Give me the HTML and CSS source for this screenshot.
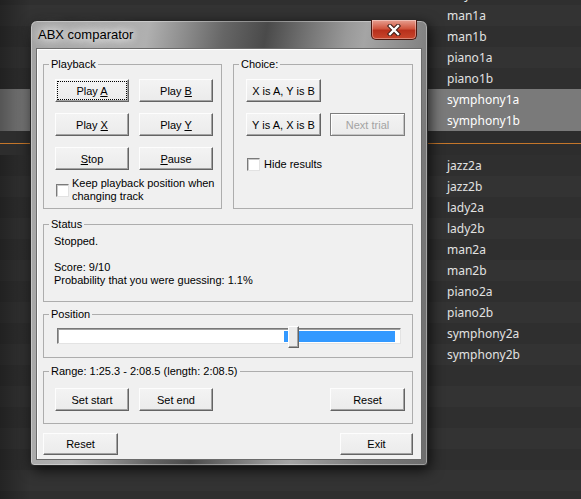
FILE: index.html
```html
<!DOCTYPE html>
<html lang="en">
<head>
    <meta charset="UTF-8">
    <meta name="viewport" content="width=device-width, initial-scale=1.0">
    <title>ABX comparator</title>
    <link rel="stylesheet" href="styles.css">
</head>
<body>
    <!-- playlist behind the dialog -->
    <ul class="tracks">
        <li>lady1b</li>
        <li>man1a</li>
        <li>man1b</li>
        <li>piano1a</li>
        <li>piano1b</li>
        <li class="selected">symphony1a</li>
        <li class="selected">symphony1b</li>
        <li class="separator"></li>
        <li>jazz2a</li>
        <li>jazz2b</li>
        <li>lady2a</li>
        <li>lady2b</li>
        <li>man2a</li>
        <li>man2b</li>
        <li>piano2a</li>
        <li>piano2b</li>
        <li>symphony2a</li>
        <li>symphony2b</li>
        <li></li>
        <li></li>
        <li></li>
        <li></li>
        <li></li>
        <li></li>
        <li></li>
    </ul>

    <div class="window">
        <div class="titlebar">
            <span class="title">ABX comparator</span>
            <button class="close" aria-label="Close">
                <svg width="14" height="12" viewBox="0 0 14 12">
                    <path d="M3 2 L11 10 M11 2 L3 10" stroke="#3a1a14" stroke-width="4.4" stroke-linecap="square"/>
                    <path d="M3 2 L11 10 M11 2 L3 10" stroke="#fff" stroke-width="2.4" stroke-linecap="square"/>
                </svg>
            </button>
        </div>

        <div class="client">
            <div class="top-row">
                <div class="group playback">
                    <span class="caption">Playback</span>
                    <div class="btn-grid">
                        <button class="btn focus">Play <u>A</u></button>
                        <button class="btn">Play <u>B</u></button>
                        <button class="btn">Play <u>X</u></button>
                        <button class="btn">Play <u>Y</u></button>
                        <button class="btn"><u>S</u>top</button>
                        <button class="btn"><u>P</u>ause</button>
                    </div>
                    <label class="check keep">
                        <span class="box"></span>
                        <span>Keep playback position when<br>changing track</span>
                    </label>
                </div>

                <div class="group choice">
                    <span class="caption">Choice:</span>
                    <div class="btn-grid wide">
                        <button class="btn">X is A, Y is B</button>
                        <span></span>
                        <button class="btn">Y is A, X is B</button>
                        <button class="btn" disabled>Next trial</button>
                    </div>
                    <label class="check hide">
                        <span class="box"></span>
                        <span>Hide results</span>
                    </label>
                </div>
            </div>

            <div class="group status">
                <span class="caption">Status</span>
                <p>Stopped.</p>
                <p>&nbsp;</p>
                <p>Score: 9/10</p>
                <p>Probability that you were guessing: 1.1%</p>
            </div>

            <div class="group position">
                <span class="caption">Position</span>
                <div class="track">
                    <div class="range-fill" style="left: 226px; width: 111px;"></div>
                    <div class="thumb" style="left: 230px;"></div>
                </div>
            </div>

            <div class="group range">
                <span class="caption">Range: 1:25.3 - 2:08.5 (length: 2:08.5)</span>
                <button class="btn">Set start</button>
                <button class="btn">Set end</button>
                <button class="btn push-right">Reset</button>
            </div>

            <div class="footer">
                <button class="btn reset">Reset</button>
                <button class="btn exit">Exit</button>
            </div>
        </div>
    </div>
</body>
</html>
```

FILE: styles.css
```css
* {
    box-sizing: border-box;
}
body {
    margin: 0;
    height: 499px;
    overflow: hidden;
    position: relative;
    background-color: #303030;
    font-family: "Liberation Sans", Arial, sans-serif;
    font-size: 11px;
}

/* playlist */
.tracks {
    list-style: none;
    margin: -16px 0 0;
    padding: 0;
    position: relative;
}
.tracks::before {
    content: '';
    position: absolute;
    left: 0;
    top: 0;
    bottom: 0;
    width: 30px;
    background: linear-gradient(90deg, rgba(0,0,0,0.3), rgba(0,0,0,0));
}
.tracks li {
    height: 21px;
    line-height: 21px;
    padding-left: 447px;
    font-family: "Noto Sans", sans-serif;
    font-size: 12px;
    color: #e2e2e2;
    background-color: #333;
}
.tracks li:nth-child(odd) {
    background-color: #2f2f2f;
}
.tracks li.selected {
    background-color: #7a7a7a;
    color: #fff;
}
.tracks li.separator {
    height: 24px;
    background-color: #2d2d2d;
    position: relative;
}
.tracks li.separator::after {
    content: '';
    position: absolute;
    left: 0;
    right: 0;
    top: 12px;
    height: 1px;
    background-color: #c4762a;
}

/* dialog window */
.window {
    position: absolute;
    left: 30px;
    top: 20px;
    width: 398px;
    height: 446px;
    padding: 0 5px 5px;
    display: flex;
    flex-direction: column;
    border: 1px solid #262626;
    border-radius: 7px 7px 4px 4px;
    background: linear-gradient(100deg, #a2a2a2 0%, #b0b0b0 25%, #8c8c8c 33%, #666 41%, #4a4a4a 50%, #707070 58%, #999 67%, #a5a5a5 71%, #8f8f8f 79%, #7a7a7a 87%, #6d6d6d 100%);
    box-shadow: 2px 4px 14px rgba(0,0,0,0.75), inset 0 0 0 1px rgba(255,255,255,0.35);
}
.titlebar {
    height: 27px;
    position: relative;
    display: flex;
    align-items: center;
    padding-left: 2px;
}
.title {
    font-size: 13px;
    color: #000;
    text-shadow: 0 0 8px #fff, 0 0 12px #fff, 0 0 20px rgba(255,255,255,0.9);
}
.close {
    position: absolute;
    right: 5px;
    top: -1px;
    width: 46px;
    height: 20px;
    padding: 0;
    display: flex;
    align-items: center;
    justify-content: center;
    border: 1px solid #4a1810;
    border-top: none;
    border-radius: 0 0 5px 5px;
    background: linear-gradient(#e8a092 0%, #d0563f 45%, #b8301c 55%, #c8462c 100%);
    box-shadow: inset 0 0 0 1px rgba(255,255,255,0.35);
}

.client {
    flex: 1;
    background-color: #f0f0f0;
    border: 1px solid #6a6a6a;
    box-shadow: inset 1px 1px 0 #fff;
    padding: 15px 8px 0 6px;
    display: flex;
    flex-direction: column;
}

/* group boxes */
.group {
    position: relative;
    border: 1px solid #adadad;
}
.caption {
    position: absolute;
    top: -7px;
    left: 5px;
    padding: 0 2px;
    line-height: 13px;
    background-color: #f0f0f0;
    color: #000;
    white-space: nowrap;
}
.top-row {
    display: flex;
    gap: 11px;
    height: 145px;
}
.playback {
    width: 179px;
    padding: 14px 0 0 11px;
}
.choice {
    width: 180px;
    padding: 14px 0 0 12px;
}
.btn-grid {
    display: grid;
    grid-template-columns: 74px 74px;
    column-gap: 10px;
    row-gap: 11px;
}
.btn-grid.wide {
    grid-template-columns: 75px 75px;
    column-gap: 9px;
}

/* buttons */
.btn {
    height: 23px;
    padding: 0;
    font-family: inherit;
    font-size: 11px;
    color: #000;
    background: linear-gradient(#f3f3f3, #ebebeb);
    border: 1px solid;
    border-color: #fdfdfd #646464 #646464 #fdfdfd;
    box-shadow: inset -1px -1px 0 #a3a3a3;
    border-radius: 0;
}
.btn u {
    text-decoration: underline;
    text-underline-offset: 1px;
}
.btn.focus {
    outline: 1px dotted #000;
    outline-offset: -3px;
}
.btn:disabled {
    color: #a3a3a3;
    border-color: #7e7e7e;
    box-shadow: inset 1px 1px 0 #fff, inset -1px -1px 0 #c4c4c4;
}

/* check boxes */
.check {
    display: flex;
    align-items: center;
    gap: 3px;
    line-height: 13px;
    color: #000;
}
.box {
    width: 13px;
    height: 13px;
    flex: none;
    background-color: #fff;
    border: 1px solid;
    border-color: #7a7a7a #e2e2e2 #e2e2e2 #7a7a7a;
    box-shadow: inset 1px 1px 0 #c8c8c8;
}
.keep {
    margin-top: 7px;
    padding-left: 1px;
}
.hide {
    margin-top: 22px;
    padding-left: 1px;
    gap: 4px;
}

/* status */
.status {
    margin-top: 15px;
    height: 78px;
    padding: 10px 0 0 10px;
}
.status p {
    margin: 0;
    line-height: 13px;
    color: #000;
}

/* position slider */
.position {
    margin-top: 12px;
    height: 44px;
    padding: 13px 0 0 13px;
}
.track {
    position: relative;
    width: 344px;
    height: 16px;
    background-color: #fff;
    border: 1px solid;
    border-color: #787878 #e3e3e3 #e3e3e3 #787878;
    box-shadow: inset 1px 1px 0 #a0a0a0;
}
.range-fill {
    position: absolute;
    top: 2px;
    height: 11px;
    background-color: #3399ff;
}
.thumb {
    position: absolute;
    top: -3px;
    width: 11px;
    height: 22px;
    background-color: #ebebeb;
    border: 1px solid;
    border-color: #fff #646464 #646464 #fff;
    box-shadow: inset -1px -1px 0 #a3a3a3;
}

/* range */
.range {
    margin-top: 13px;
    height: 53px;
    padding: 16px 7px 0 11px;
    display: flex;
    align-items: flex-start;
    gap: 10px;
}
.range .btn {
    width: 74px;
}
.range .push-right {
    margin-left: auto;
    width: 75px;
}

/* bottom buttons */
.footer {
    margin-top: 9px;
    display: flex;
    justify-content: space-between;
}
.footer .reset {
    width: 75px;
    height: 22px;
}
.footer .exit {
    width: 73px;
    height: 22px;
}
```
